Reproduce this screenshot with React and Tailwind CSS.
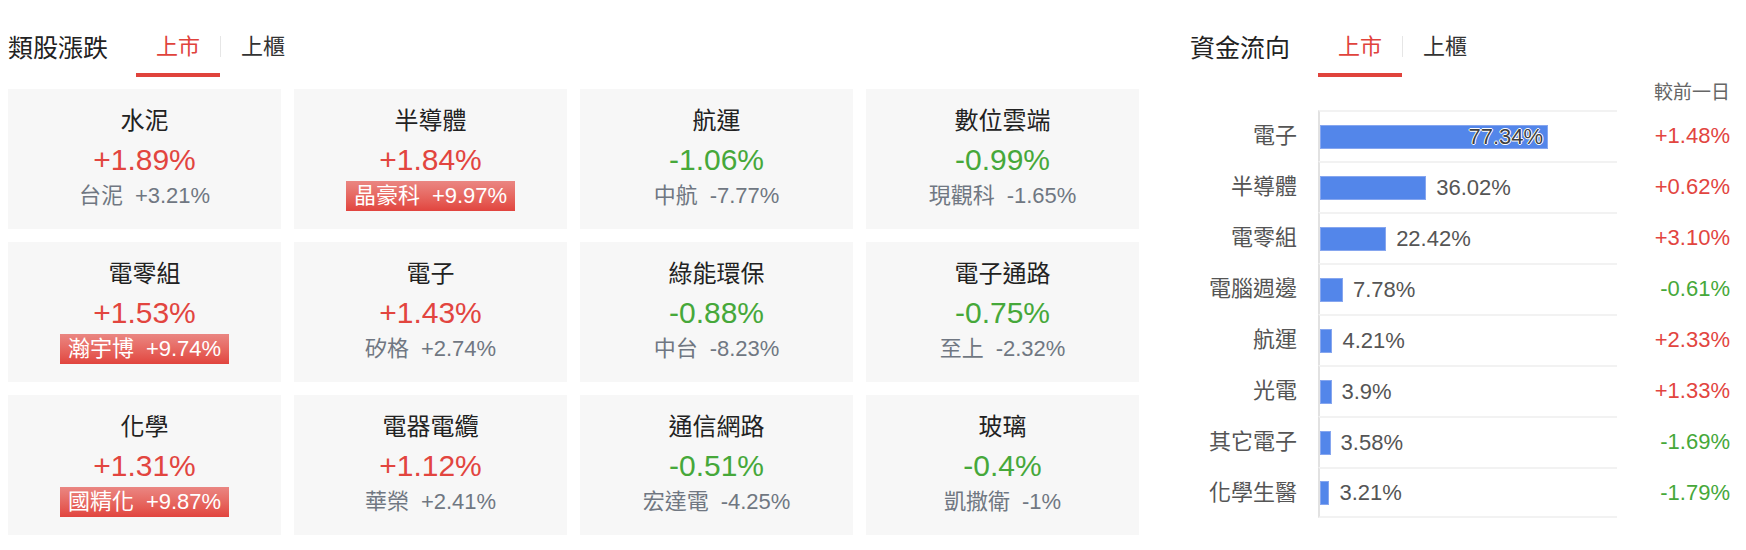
import React from 'react';

const sectors = [
  { name: '水泥', pct: '+1.89%', stock: '台泥', stockPct: '+3.21%' },
  { name: '半導體', pct: '+1.84%', stock: '晶豪科', stockPct: '+9.97%', limit: true },
  { name: '航運', pct: '-1.06%', stock: '中航', stockPct: '-7.77%' },
  { name: '數位雲端', pct: '-0.99%', stock: '現觀科', stockPct: '-1.65%' },
  { name: '電零組', pct: '+1.53%', stock: '瀚宇博', stockPct: '+9.74%', limit: true },
  { name: '電子', pct: '+1.43%', stock: '矽格', stockPct: '+2.74%' },
  { name: '綠能環保', pct: '-0.88%', stock: '中台', stockPct: '-8.23%' },
  { name: '電子通路', pct: '-0.75%', stock: '至上', stockPct: '-2.32%' },
  { name: '化學', pct: '+1.31%', stock: '國精化', stockPct: '+9.87%', limit: true },
  { name: '電器電纜', pct: '+1.12%', stock: '華榮', stockPct: '+2.41%' },
  { name: '通信網路', pct: '-0.51%', stock: '宏達電', stockPct: '-4.25%' },
  { name: '玻璃', pct: '-0.4%', stock: '凱撒衛', stockPct: '-1%' },
];

const flows = [
  { name: '電子', share: 77.34, change: '+1.48%' },
  { name: '半導體', share: 36.02, change: '+0.62%' },
  { name: '電零組', share: 22.42, change: '+3.10%' },
  { name: '電腦週邊', share: 7.78, change: '-0.61%' },
  { name: '航運', share: 4.21, change: '+2.33%' },
  { name: '光電', share: 3.9, change: '+1.33%' },
  { name: '其它電子', share: 3.58, change: '-1.69%' },
  { name: '化學生醫', share: 3.21, change: '-1.79%' },
];

const up = (v) => v.startsWith('+');

function SectionHeader({ title }) {
  return (
    <div className="flex items-start pt-[31px]">
      <div className="w-[100px] mt-[1px] text-[25px] leading-8 text-[#222]">{title}</div>
      <div className="ml-[28px] px-5 pb-[10px] text-[22px] leading-8 text-[#e0433c] border-b-4 border-[#e0433c]">上市</div>
      <div className="mt-[5px] h-[21px] w-px bg-[#e6e6e6]" />
      <div className="px-5 text-[22px] leading-8 text-[#333]">上櫃</div>
    </div>
  );
}

function SectorCard({ s }) {
  return (
    <div className="h-[140px] bg-[#f7f7f7] flex flex-col items-center pt-4">
      <div className="text-[24px] leading-8 text-[#222]">{s.name}</div>
      <div className={`mt-[3px] text-[30px] leading-[40px] ${up(s.pct) ? 'text-[#e2453f]' : 'text-[#46a83a]'}`}>{s.pct}</div>
      {s.limit ? (
        <div className="mt-[1px] flex px-2 text-[22px] leading-[30px] text-white bg-linear-to-b from-[#ea8682] to-[#e1443e]">
          <span>{s.stock}</span>
          <span className="ml-3">{s.stockPct}</span>
        </div>
      ) : (
        <div className="mt-[1px] flex text-[22px] leading-[30px] text-[#707782]">
          <span>{s.stock}</span>
          <span className="ml-3">{s.stockPct}</span>
        </div>
      )}
    </div>
  );
}

function FlowRow({ f, last }) {
  // wide bars carry their label inside, the rest put it after the bar
  const inside = f.share > 60;
  return (
    <div className="flex items-center h-[51px]">
      <div className="w-[107px] shrink-0 text-right text-[22px] text-[#555]">{f.name}</div>
      <div
        className={`ml-[21px] w-[299px] self-stretch flex items-center border-l-2 border-l-[#e2e2e2] border-t-2 border-t-[#f2f2f2] ${
          last ? 'border-b-2 border-b-[#f2f2f2]' : ''
        }`}
      >
        <div
          className="h-6 bg-[#5386ea] border border-[#86a6ef] flex items-center justify-end"
          style={{ width: `${f.share * 2.95}px` }}
        >
          {inside && (
            <span className="pr-[4px] text-[22px] text-[#3f3f3f] [text-shadow:1px_0_#fff,-1px_0_#fff,0_1px_#fff,0_-1px_#fff]">
              {f.share}%
            </span>
          )}
        </div>
        {!inside && <span className="ml-[10px] text-[22px] text-[#555]">{f.share}%</span>}
      </div>
      <div className={`flex-1 text-right text-[22px] ${up(f.change) ? 'text-[#e2453f]' : 'text-[#46a83a]'}`}>{f.change}</div>
    </div>
  );
}

export default function App() {
  return (
    <div className='w-[1746px] h-[550px] bg-white flex font-["Liberation_Sans","Noto_Sans_CJK_TC",sans-serif]'>
      {/* sector moves */}
      <div className="ml-2 w-[1131px] shrink-0">
        <SectionHeader title="類股漲跌" />
        <div className="mt-3 grid grid-cols-4 gap-[13px]">
          {sectors.map((s) => (
            <SectorCard key={s.name} s={s} />
          ))}
        </div>
      </div>

      {/* fund flow */}
      <div className="ml-[51px] w-[540px] shrink-0">
        <SectionHeader title="資金流向" />
        <div className="mt-1 text-right text-[19px] leading-6 text-[#666]">較前一日</div>
        <div className="mt-[5px]">
          {flows.map((f, i) => (
            <FlowRow key={f.name} f={f} last={i === flows.length - 1} />
          ))}
        </div>
      </div>
    </div>
  );
}
